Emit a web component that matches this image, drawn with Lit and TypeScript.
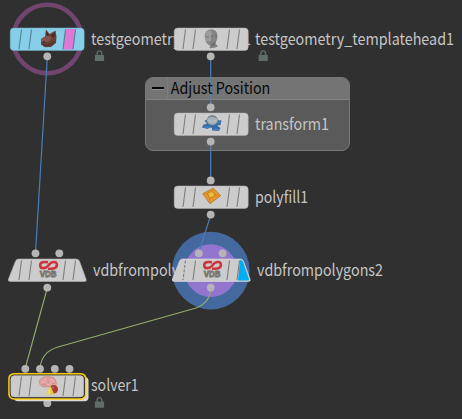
import { LitElement, html, svg, css, nothing } from "lit";
import { customElement, property } from "lit/decorators.js";
import { styleMap } from "lit/directives/style-map.js";

type Pt = [number, number];
interface NodeData {
  x: number;
  y: number;
  name: string;
  icon: string;
  shape?: "box" | "trap";
  labelX?: number;
  labelW: number;
  locked?: boolean;
  fill?: string;
  flag?: "template" | "display";
  selected?: boolean;
  stacked?: boolean;
  dashed?: boolean;
}

const NODES: NodeData[] = [
  { x: 10, y: 28, name: "testgeometry_pighead1", icon: "pig", labelW: 160, locked: true, fill: "#87cfe8", flag: "template" },
  { x: 173.7, y: 28, name: "testgeometry_templatehead1", icon: "head", labelX: 81.3, labelW: 199, locked: true },
  { x: 173.7, y: 113.2, name: "transform1", icon: "transform", labelX: 81.3, labelW: 74 },
  { x: 173.7, y: 186.2, name: "polyfill1", icon: "fill", labelX: 81.3, labelW: 53 },
  { x: 10, y: 259.2, name: "vdbfrompolygons1", icon: "vdb", shape: "trap", labelX: 83, labelW: 126 },
  { x: 173.7, y: 259.2, name: "vdbfrompolygons2", icon: "vdb", shape: "trap", labelX: 83.3, labelW: 126, flag: "display", dashed: true },
  { x: 10, y: 374.7, name: "solver1", icon: "brain", labelW: 47.5, locked: true, selected: true, stacked: true },
];

const PORTS: Pt[] = [
  [47.3, 56.3], [210.7, 56.3], [210.7, 107.3], [210.7, 141.6], [210.7, 180.4], [210.7, 214.6],
  [35.5, 253.3], [59.3, 253.3], [47.3, 287.6], [198.8, 253.3], [222.6, 253.3], [210.7, 287.6],
  [25.3, 368.8], [40, 368.8], [54.8, 368.8], [69.5, 368.8], [47.3, 403.2],
];

const ICONS: Record<string, unknown> = {
  pig: svg`
    <path d="M31 11 L35 8.500 L36 1.500 L39.500 6 L45.500 2.500 L46.500 9 L46 15 L41 19 L35 19.200 L31 16.500 Z" fill="#683f37"/>
    <path d="M31 11 L37 7.500 L42 9 L40 13 L35 14 L31 13.500 Z" fill="#84544a"/>
    <path d="M36 2 L39 7 L37 8 Z M45 4 L44 10 L41 8 Z" fill="#432b29"/>
    <path d="M33 16.500 Q38 19 44 14" stroke="#452c2a" fill="none"/>
    <circle cx="34" cy="14" r=".9" fill="#40292a"/>`,
  head: svg`
    <path d="M31 10 Q29.500 2 37.500 1.200 Q44 2 43.500 9 Q43 13 41 15 L44 18.500 Q40 20.700 35.500 20.200 L36 17.500 Q32 17 31 10Z" fill="#858585"/>
    <path d="M31.500 8 Q31 3 36 2.500 Q39 4 37 8 L37 14 L34 16 Q32 14 31.500 8Z" fill="#9d9d9d"/>
    <path d="M32 9h3m2-1h2M33 14h4M41 7q2-1 1 3" stroke="#6b6b6b" stroke-width=".8" fill="none"/>
    <path d="M37 16 L42 13 L41 17 L38 19Z" fill="#6f6f6f"/>`,
  transform: svg`
    <path d="M30.500 7.500 L34 6.500 L42 9 L42 7 L47.500 7.500 L46.500 12 L43 12.500 L46.500 15 L45 18 L38 17.500 L38 15 L35 14.500 L34 16 L28 14.500 L29.500 11.500 L33 11 Z" fill="#366da9"/>
    <path d="M31 9l5 1M42 9l4 .5M30 13.500l4 1M40 16.500l5 .2" stroke="#5f90c1" stroke-width=".8"/>
    <ellipse cx="38.300" cy="7.300" rx="5.400" ry="4.700" fill="#a7b1b7" stroke="#7d8a92" stroke-width=".8"/>
    <path d="M33.500 7q5 3 9.500 0" stroke="#c1cbcf" stroke-width=".6" fill="none"/>
    <path d="M34 4.300q4-2.500 8 0" stroke="#6d7880" fill="none"/>`,
  fill: svg`
    <path d="M28.700 7.700 L39.300 2 L46.700 9.700 L36 17.800 Z" fill="#e6962c" stroke="#ab7a3a" stroke-width=".8"/>
    <path d="M33.500 7 L38 5.200 L41 8 L39.500 11 L35 12 Z" fill="#e4ae30" stroke="#c07e1d" stroke-width=".8"/>
    <path d="M31 7.500l3 .5M39 5l1-2M41 9l3 .5M35.500 12v4" stroke="#c98122" stroke-width=".7"/>
    <circle cx="37.200" cy="8.700" r="1.900" fill="#e9c243"/>`,
  vdb: svg`
    <path d="M38 3.300 C34 2.700 30.200 3 30.200 6.200 C30.200 10.200 35.500 10 38.300 6.500 C41 2.300 46.900 1.600 46.900 5.800 C46.900 9.800 43 10 38 9.600" fill="none" stroke="#ce333b" stroke-width="2.600"/>
    <text x="29.800" y="18.100" class="vdb" textLength="16.800" lengthAdjust="spacingAndGlyphs">VDB</text>`,
  brain: svg`
    <path d="M29.500 8 Q28.500 4 33 2.500 Q36 .5 40 1.800 Q45 2 46 6.500 Q47.500 10.500 44 11.700 Q41 13 38 11.500 Q34 13 31.500 11 Q29.500 10.500 29.500 8Z" fill="#df9f9d" stroke="#c78684" stroke-width=".6"/>
    <path d="M31 8q3-3 4 0M34 5q3-2 4 2M36 9q4 2 5-2M40 5q4-1 4 3" fill="none" stroke="#f0c0bd" stroke-width=".8"/>
    <path d="M32 10q3-2 5 0M38 4q-2 3 2 4M42 9l3-1" fill="none" stroke="#c07d7c" stroke-width=".6"/>
    <circle cx="43.700" cy="14.200" r="4.300" fill="#ab3b32"/><circle cx="42.800" cy="12.700" r="1.300" fill="#bd5c51"/>
    <path d="M40.500 11 L44 18.500 Q40 21 36 18.500 Z" fill="#e2c536"/>
    <path d="M40.500 11.500 L40.500 19.500 L36.500 18.500Z" fill="#efdc62"/>`,
};

@customElement("network-node")
export class NetworkNode extends LitElement {
  @property({ attribute: false }) data!: NodeData;

  static styles = css`
    :host { display: block; position: absolute; }
    .tile { display: block; overflow: visible; }
    .vdb { font: 700 8.8px "Liberation Sans", sans-serif; fill: #b3b3ae; stroke: #74746f; stroke-width: 0.9px; }
  `;

  render() {
    const d = this.data;
    const trap = d.shape === "trap";
    const fill = d.fill ?? "#cccccc";
    const line = d.fill ? "#4f8296" : "#7d7d7d";
    return html`<svg class="tile" width="75" height="23">
      ${d.stacked ? svg`<rect x="4" y="2" width="74.500" height="24.300" rx="4" fill="#d9d9d6"/>` : nothing}
      ${d.selected ? svg`<rect x="-1.800" y="-2" width="78.300" height="26.700" rx="5.500" fill="#ffcc14"/><rect x="-.3" y="-.5" width="75.300" height="23.700" rx="4.500" fill="#26251f"/>` : nothing}
      ${trap
        ? svg`<path d="M8.500 0 H66 Q68.500 0 69.500 2.200 L76 20 Q77 22.500 74.500 22.500 H.500 Q-2.500 22.500 -1.500 20 L5.500 2.200 Q6.500 0 8.500 0Z" fill=${fill} stroke=${d.flag ? "#dcdcdc" : "#b2b2b2"} stroke-width=".6"/>`
        : svg`<rect x=${d.selected ? 0.8 : 0.2} y=${d.selected ? 0.6 : 0} width=${d.selected ? 73 : 74} height=${d.selected ? 21.4 : 22.5} rx="3.500" fill=${fill} stroke=${d.fill ? "#69acc4" : "#b2b2b2"} stroke-width=".5"/>`}
      ${d.flag === "template" ? svg`<path d="M55.500 1 H65.500 L63.500 21.500 H53 Z" fill="#df78d5"/>` : nothing}
      ${d.flag === "display" ? svg`<path d="M66 1.300 H67 Q68.500 1.500 69 3 L74.900 20 Q75.300 21.500 73.700 21.500 H64 Z" fill="#00adf5"/>` : nothing}
      <path d="M11.500 1.500 L9 21" stroke=${line} stroke-width="1.100" stroke-dasharray=${d.dashed ? "3 1.500" : "none"}/>
      <path d="M21.500 1.500 L19 21 M55.500 1.500 L53 21 M65.500 1.500 L63 21" stroke=${line} stroke-width="1.100"/>
      ${ICONS[d.icon]}
    </svg>`;
  }
}

@customElement("app-root")
export class AppRoot extends LitElement {
  static styles = css`
    :host {
      display: block; position: relative; width: 462px; height: 419px; overflow: hidden;
      background: #303030; font-family: "Noto Sans CJK SC", "Noto Sans", sans-serif;
    }
    .layer { position: absolute; left: 0; top: 0; }
    .label { fill: #c5c5c5; font-size: 16.500px; }
    .title { fill: #080808; font-size: 16px; }
    .group {
      position: absolute; left: 145px; top: 77px; width: 205px; height: 73.500px; box-sizing: border-box;
      border: 1px solid #777; border-radius: 8px; background: #5a5a5a; overflow: hidden;
    }
    .bar { display: flex; height: 22px; box-sizing: border-box; background: #747474; border-bottom: 1px solid #828282; }
    .fold { display: flex; align-items: center; justify-content: flex-end; width: 22px; border-right: 1px solid #7d7d7d; padding-right: 3px; box-sizing: border-box; }
    .minus { width: 12px; height: 2px; margin-bottom: 1px; background: #050505; box-shadow: 0 1px #929292; }
  `;

  private lock(x: number, y: number) {
    return svg`<g transform="translate(${x} ${y})">
      <path d="M2.300 5 V3.200 A2.300 2.500 0 0 1 6.900 3.200 V5" fill="none" stroke="#616d69" stroke-width="1.400"/>
      <rect x="0" y="4.700" width="9.200" height="6.200" rx=".4" fill="#616d69"/>
    </g>`;
  }

  render() {
    return html`
      <svg class="layer" width="462" height="419">
        <circle cx="47.300" cy="39" r="34.200" fill="none" stroke="#724470" stroke-width="4.600"/>
        <circle cx="210.800" cy="270.600" r="38.800" fill="#44699f"/>
        <circle cx="210.800" cy="270.600" r="26.300" fill="#9275cc"/>
      </svg>
      <div class="group"><div class="bar"><div class="fold"><div class="minus"></div></div></div></div>
      <svg class="layer" width="462" height="419">
        <g fill="none" stroke="#4b7db9" stroke-width="1.200">
          <path d="M47.300 57 L35.500 253"/>
          <path d="M210.700 57 V77 M210.700 151 V180"/>
          <path d="M210.700 77 V107 M210.700 142 V151" stroke="#6383a8"/>
          <path d="M210.700 215 L198.800 253"/>
        </g>
        <text class="title" x="170.800" y="93.500" textLength="99.500" lengthAdjust="spacingAndGlyphs">Adjust Position</text>
        <g fill="none" stroke="#93ac6d" stroke-width="1.100">
          <path d="M47.300 288 L25.300 368"/>
          <path d="M210.700 288 C210.500 299 205 304.500 196 308 L58 347 C46 350.500 41 358 40 368"/>
        </g>
        ${NODES.map((n) => svg`
          <text class="label" x=${n.x + (n.labelX ?? 81)} y=${n.y + 16.6} textLength=${n.labelW} lengthAdjust="spacingAndGlyphs">${n.name}</text>
          ${n.locked ? this.lock(n.x + 84.9, n.y + 22.2) : nothing}`)}
        ${PORTS.map(([x, y]) => svg`<circle cx=${x} cy=${y} r="3.900" fill="#b5b5b5"/>`)}
      </svg>
      ${NODES.map((n) => html`<network-node .data=${n} style=${styleMap({ left: `${n.x}px`, top: `${n.y}px` })}></network-node>`)}
    `;
  }
}
